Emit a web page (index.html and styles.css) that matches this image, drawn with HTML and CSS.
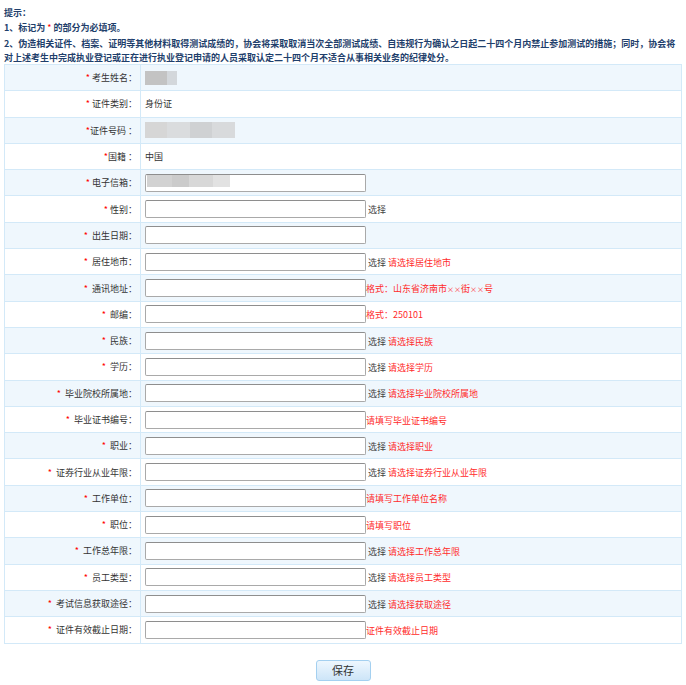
FILE: index.html
```html
<!DOCTYPE html>
<html lang="zh-CN">
<head>
    <meta charset="UTF-8">
    <title>考生信息</title>
    <link rel="stylesheet" href="styles.css">
</head>
<body>
    <div class="tips">
        <p>提示：</p>
        <p class="tips-first">1、标记为 <span class="req">*</span> 的部分为必填项。</p>
        <p class="tips-long">2、伪造相关证件、档案、证明等其他材料取得测试成绩的，协会将采取取消当次全部测试成绩、自违规行为确认之日起二十四个月内禁止参加测试的措施；同时，协会将对上述考生中完成执业登记或正在进行执业登记申请的人员采取认定二十四个月不适合从事相关业务的纪律处分。</p>
    </div>

    <table class="form-table">
        <tr>
            <td class="label"><span class="req">*</span> 考生姓名：</td>
            <td class="value"><span class="blur blur-name"></span></td>
        </tr>
        <tr>
            <td class="label"><span class="req">*</span> 证件类别：</td>
            <td class="value">身份证</td>
        </tr>
        <tr>
            <td class="label"><span class="req">*</span>证件号码 ：</td>
            <td class="value"><span class="blur blur-id"></span></td>
        </tr>
        <tr>
            <td class="label"><span class="req">*</span>国籍 ：</td>
            <td class="value">中国</td>
        </tr>
        <tr>
            <td class="label"><span class="req">*</span> 电子信箱：</td>
            <td class="value"><span class="input-wrap"><input type="text"><span class="blur blur-mail"></span></span></td>
        </tr>
        <tr>
            <td class="label"><span class="req">*</span> 性别：</td>
            <td class="value"><input type="text"> <span class="pick">选择</span></td>
        </tr>
        <tr>
            <td class="label"><span class="req">*</span>&nbsp; 出生日期：</td>
            <td class="value"><input type="text"></td>
        </tr>
        <tr>
            <td class="label"><span class="req">*</span>&nbsp; 居住地市：</td>
            <td class="value"><input type="text"> <span class="pick">选择</span> <span class="hint">请选择居住地市</span></td>
        </tr>
        <tr>
            <td class="label"><span class="req">*</span>&nbsp; 通讯地址：</td>
            <td class="value"><input type="text"><span class="hint">格式：山东省济南市<small>××</small>街<small>××</small>号</span></td>
        </tr>
        <tr>
            <td class="label"><span class="req">*</span>&nbsp; 邮编：</td>
            <td class="value"><input type="text"><span class="hint">格式：250101</span></td>
        </tr>
        <tr>
            <td class="label"><span class="req">*</span>&nbsp; 民族：</td>
            <td class="value"><input type="text"> <span class="pick">选择</span> <span class="hint">请选择民族</span></td>
        </tr>
        <tr>
            <td class="label"><span class="req">*</span>&nbsp; 学历：</td>
            <td class="value"><input type="text"> <span class="pick">选择</span> <span class="hint">请选择学历</span></td>
        </tr>
        <tr>
            <td class="label"><span class="req">*</span>&nbsp; 毕业院校所属地：</td>
            <td class="value"><input type="text"> <span class="pick">选择</span> <span class="hint">请选择毕业院校所属地</span></td>
        </tr>
        <tr>
            <td class="label"><span class="req">*</span>&nbsp; 毕业证书编号：</td>
            <td class="value"><input type="text"><span class="hint">请填写毕业证书编号</span></td>
        </tr>
        <tr>
            <td class="label"><span class="req">*</span>&nbsp; 职业：</td>
            <td class="value"><input type="text"> <span class="pick">选择</span> <span class="hint">请选择职业</span></td>
        </tr>
        <tr>
            <td class="label"><span class="req">*</span>&nbsp; 证券行业从业年限：</td>
            <td class="value"><input type="text"> <span class="pick">选择</span> <span class="hint">请选择证券行业从业年限</span></td>
        </tr>
        <tr>
            <td class="label"><span class="req">*</span>&nbsp; 工作单位：</td>
            <td class="value"><input type="text"><span class="hint">请填写工作单位名称</span></td>
        </tr>
        <tr>
            <td class="label"><span class="req">*</span>&nbsp; 职位：</td>
            <td class="value"><input type="text"><span class="hint">请填写职位</span></td>
        </tr>
        <tr>
            <td class="label"><span class="req">*</span>&nbsp; 工作总年限：</td>
            <td class="value"><input type="text"> <span class="pick">选择</span> <span class="hint">请选择工作总年限</span></td>
        </tr>
        <tr>
            <td class="label"><span class="req">*</span>&nbsp; 员工类型：</td>
            <td class="value"><input type="text"> <span class="pick">选择</span> <span class="hint">请选择员工类型</span></td>
        </tr>
        <tr>
            <td class="label"><span class="req">*</span>&nbsp; 考试信息获取途径：</td>
            <td class="value"><input type="text"> <span class="pick">选择</span> <span class="hint">请选择获取途径</span></td>
        </tr>
        <tr>
            <td class="label"><span class="req">*</span>&nbsp; 证件有效截止日期：</td>
            <td class="value"><input type="text"><span class="hint">证件有效截止日期</span></td>
        </tr>
    </table>

    <div class="actions">
        <button class="btn-save" type="button">保存</button>
    </div>
</body>
</html>
```

FILE: styles.css
```css
body {
    margin: 0;
    padding: 0 4px;
    font-family: "Noto Sans CJK SC", "Noto Sans", sans-serif;
    font-size: 9px;
    color: #333;
    background: #fff;
}
.tips {
    padding-top: 6px;
    color: #1f3f6c;
    font-weight: bold;
}
.tips p {
    margin: 0;
    line-height: 13px;
}
.tips .tips-first {
    margin-top: 2px;
}
.tips .tips-long {
    margin-top: 3px;
    line-height: 13.5px;
}
.req {
    color: #f00;
    font-weight: normal;
}
.form-table {
    width: 100%;
    margin-top: 0;
    border-collapse: collapse;
    border: 1px solid #c4e1f6;
}
.form-table td {
    height: 25.3px;
    padding: 0 4px;
    border: 1px solid #d3e9f8;
    white-space: nowrap;
}
.form-table tr:nth-child(odd) {
    background: #eff7fd;
}
.form-table .label {
    width: 128px;
    text-align: right;
    padding-right: 3px;
}
.form-table .value {
    padding-left: 4px;
}
.form-table input {
    width: 221px;
    height: 18px;
    box-sizing: border-box;
    margin: 0;
    padding: 0 3px;
    border: 1px solid #a9a9a9;
    border-top-color: #8e8e8e;
    border-radius: 2px;
    background: #fff;
    vertical-align: middle;
}
.pick {
    color: #444;
    vertical-align: middle;
}
.hint {
    color: #ff2b2b;
    vertical-align: middle;
}
.hint small {
    font-size: 7px;
}
.input-wrap {
    position: relative;
    display: inline-block;
    vertical-align: middle;
}
.blur {
    display: inline-block;
    vertical-align: middle;
}
.blur-name {
    width: 32px;
    height: 14px;
    background: linear-gradient(90deg, #c3c3c3 0, #c3c3c3 68%, #d3d7db 68%);
}
.blur-id {
    width: 90px;
    height: 16px;
    background: linear-gradient(90deg, #d6d6d6 0, #d6d6d6 24%, #dadcde 24%, #dadcde 50%, #cfd1d3 50%, #cfd1d3 74%, #d8dadc 74%);
}
.blur-mail {
    position: absolute;
    left: 2px;
    top: 1px;
    width: 83px;
    height: 12px;
    background: linear-gradient(90deg, #d2d2d2 0, #d2d2d2 30%, #cbcbcb 30%, #cbcbcb 50%, #d8d8d8 50%, #d8d8d8 80%, #e2e2e2 80%);
}
.actions {
    padding-top: 16px;
    text-align: center;
}
.btn-save {
    width: 55px;
    height: 21px;
    padding: 0;
    border: 1px solid #a4d0f0;
    border-radius: 3px;
    background: linear-gradient(#eef7fe, #cde5f8);
    font-family: "Noto Sans CJK SC", sans-serif;
    font-size: 11px;
    color: #333;
    cursor: pointer;
}
```
